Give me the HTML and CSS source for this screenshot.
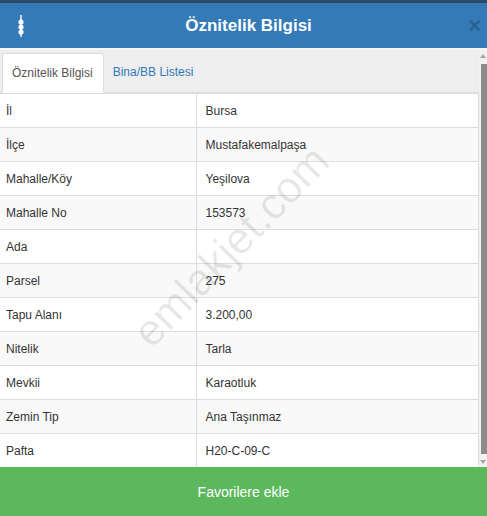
FILE: index.html
```html
<!DOCTYPE html>
<html lang="tr">
<head>
  <meta charset="UTF-8">
  <meta name="viewport" content="width=device-width, initial-scale=1.0">
  <title>Öznitelik Bilgisi</title>
  <link rel="stylesheet" href="styles.css">
</head>
<body>
  <div class="modal">
    <div class="modal-header">
      <span class="menu-icon">
        <svg width="8" height="22" viewBox="0 0 8 22">
          <rect x="3.3" y="0" width="1.4" height="22" fill="#fff"/>
          <circle cx="4" cy="7" r="2.6" fill="#fff"/>
          <circle cx="4" cy="12" r="2.6" fill="#fff"/>
          <circle cx="4" cy="17" r="2.6" fill="#fff"/>
        </svg>
      </span>
      <h1>Öznitelik Bilgisi</h1>
      <span class="close">×</span>
    </div>

    <div class="modal-body">
      <div class="content">
        <ul class="tabs">
          <li class="active"><a href="#">Öznitelik Bilgisi</a></li>
          <li><a href="#">Bina/BB Listesi</a></li>
        </ul>
        <table class="info-table">
          <tr><td>İl</td><td>Bursa</td></tr>
          <tr><td>İlçe</td><td>Mustafakemalpaşa</td></tr>
          <tr><td>Mahalle/Köy</td><td>Yeşilova</td></tr>
          <tr><td>Mahalle No</td><td>153573</td></tr>
          <tr><td>Ada</td><td></td></tr>
          <tr><td>Parsel</td><td>275</td></tr>
          <tr><td>Tapu Alanı</td><td>3.200,00</td></tr>
          <tr><td>Nitelik</td><td>Tarla</td></tr>
          <tr><td>Mevkii</td><td>Karaotluk</td></tr>
          <tr><td>Zemin Tip</td><td>Ana Taşınmaz</td></tr>
          <tr><td>Pafta</td><td>H20-C-09-C</td></tr>
        </table>
        <div class="watermark">emlakjet.com</div>
      </div>
      <div class="scrollbar">
        <span class="arrow up"></span>
        <span class="thumb"></span>
        <span class="arrow down"></span>
      </div>
    </div>

    <button class="btn-fav">Favorilere ekle</button>
  </div>
</body>
</html>
```

FILE: styles.css
```css
:root {
  --primary: #337ab7;
  --success: #5cb85c;
  --border: #ddd;
  --text: #333;
}
* { box-sizing: border-box; margin: 0; padding: 0; }
body {
  font-family: "Liberation Sans", Arial, sans-serif;
  color: var(--text);
  background: #fff;
  width: 487px;
  height: 516px;
  overflow: hidden;
}
.modal {
  display: flex;
  flex-direction: column;
  height: 516px;
  border-top: 3px solid #2c4a66;
}
.modal-header {
  height: 47px;
  background: var(--primary);
  display: flex;
  align-items: center;
  padding: 0 6px 0 17px;
  border-bottom: 2px solid #f4f6f8;
}
.modal-header h1 {
  flex: 1;
  text-align: center;
  color: #fff;
  font-size: 17px;
  font-weight: bold;
  padding-left: 4px;
}
.menu-icon {
  display: flex;
  width: 8px;
}
.close {
  color: #23527c;
  font-size: 22px;
  font-weight: bold;
  opacity: 0.6;
  line-height: 1;
}
.modal-body {
  display: flex;
  flex: 1;
  min-height: 0;
}
.content {
  position: relative;
  flex: 1;
  overflow: hidden;
}
.tabs {
  list-style: none;
  display: flex;
  background: #eee;
  height: 43px;
  padding: 3px 0 0 2px;
  border-bottom: 1px solid var(--border);
}
.tabs li a {
  display: block;
  height: 39px;
  line-height: 38px;
  padding: 0 10px 0 9px;
  font-size: 12px;
  text-decoration: none;
  color: var(--primary);
}
.tabs li.active a {
  background: #fff;
  color: #555;
  border: 1px solid var(--border);
  border-bottom-color: #fff;
  border-radius: 3px 3px 0 0;
  height: 40px;
}
.info-table {
  width: 479px;
  border-collapse: collapse;
  font-size: 12px;
}
.info-table td {
  height: 34px;
  padding: 0 6px;
  border-top: 1px solid var(--border);
  border-right: 1px solid var(--border);
  vertical-align: middle;
}
.info-table td:first-child { width: 196px; }
.info-table td + td { padding-left: 9px; }
.info-table tr:nth-child(even) td { background: #f9f9f9; }
.watermark {
  position: absolute;
  left: 123px;
  top: 272px;
  font-size: 44px;
  color: rgba(0, 0, 0, 0.09);
  transform: rotate(-46deg);
  transform-origin: left top;
  white-space: nowrap;
  pointer-events: none;
}
.scrollbar {
  width: 8px;
  background: #f1f1f1;
  display: flex;
  flex-direction: column;
  align-items: center;
  padding: 4px 0 3px;
}
.scrollbar .thumb {
  flex: 1;
  width: 6px;
  margin: 6px 0 6px 2px;
  background: #8c8c8c;
}
.arrow {
  width: 0;
  height: 0;
  border-left: 3px solid transparent;
  border-right: 3px solid transparent;
}
.arrow.up { border-bottom: 4px solid #a3a3a3; }
.arrow.down { border-top: 4px solid #a3a3a3; }
.btn-fav {
  height: 49px;
  border: none;
  background: var(--success);
  color: #fff;
  font-family: inherit;
  font-size: 14px;
  cursor: pointer;
}
```
